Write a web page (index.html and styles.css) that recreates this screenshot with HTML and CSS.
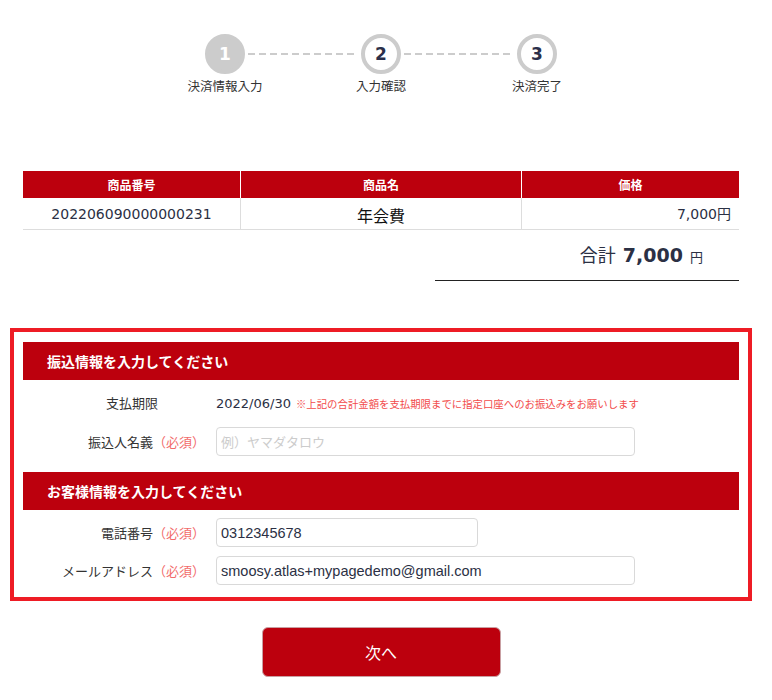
FILE: index.html
```html
<!DOCTYPE html>
<html lang="ja">
<head>
  <meta charset="UTF-8" />
  <meta name="viewport" content="width=device-width, initial-scale=1.0"/>
  <title>決済情報入力</title>
  <link rel="stylesheet" href="styles.css">
</head>
<body>

<div class="page">
  <div class="inner">
    <div class="steps">
      <div class="step current"><span class="num">1</span><span class="step-label">決済情報入力</span></div>
      <span class="dash"></span>
      <div class="step"><span class="num">2</span><span class="step-label">入力確認</span></div>
      <span class="dash"></span>
      <div class="step"><span class="num">3</span><span class="step-label">決済完了</span></div>
    </div>

    <table class="items">
      <thead>
        <tr>
          <th class="col-no">商品番号</th>
          <th class="col-name">商品名</th>
          <th class="col-price">価格</th>
        </tr>
      </thead>
      <tbody>
        <tr>
          <td class="code">202206090000000231</td>
          <td class="name">年会費</td>
          <td class="price">7,000円</td>
        </tr>
      </tbody>
    </table>

    <div class="total">
      <span class="total-label">合計</span>
      <span class="total-value">7,000</span>
      <span class="total-yen">円</span>
    </div>
  </div>

  <form class="pay-form" id="pay-form">
    <h3 class="form-head">振込情報を入力してください</h3>
    <div class="field">
      <span class="label plain">支払期限</span>
      <div class="value">
        <span class="date">2022/06/30</span>
        <span class="note">※上記の合計金額を支払期限までに指定口座へのお振込みをお願いします</span>
      </div>
    </div>
    <div class="field">
      <label class="label" for="payer">振込人名義<span class="req">（必須）</span></label>
      <input type="text" class="box" id="payer" placeholder="例）ヤマダタロウ">
    </div>

    <h3 class="form-head second">お客様情報を入力してください</h3>
    <div class="field">
      <label class="label" for="tel">電話番号<span class="req">（必須）</span></label>
      <input type="text" class="box short" id="tel" value="0312345678">
    </div>
    <div class="field last">
      <label class="label" for="mail">メールアドレス<span class="req">（必須）</span></label>
      <input type="text" class="box" id="mail" value="smoosy.atlas+mypagedemo@gmail.com">
    </div>
  </form>

  <div class="actions">
    <button type="submit" form="pay-form" class="next-btn">次へ</button>
  </div>
</div>

</body>
</html>
```

FILE: styles.css
```css
body {
  margin: 0;
  font-family: "DejaVu Sans", "Noto Sans CJK JP", sans-serif;
  color: #2b3044;
  background: #fff;
}
.page {
  width: 742px;
  margin-left: 10px;
  padding-top: 34px;
}
.inner {
  padding: 0 13px;
}

/* stepper */
.steps {
  display: flex;
  justify-content: center;
  align-items: flex-start;
}
.step {
  width: 40px;
  display: flex;
  flex-direction: column;
  align-items: center;
}
.num {
  box-sizing: border-box;
  width: 40px;
  height: 40px;
  border: 4px solid #cccccc;
  border-radius: 50%;
  background: #fff;
  display: flex;
  align-items: center;
  justify-content: center;
  font-weight: bold;
  font-size: 17px;
  color: #2b2f4a;
}
.step.current .num {
  background: #cccccc;
  color: #fff;
}
.step-label {
  margin-top: 4px;
  white-space: nowrap;
  font-family: "Noto Sans CJK JP", sans-serif;
  font-size: 12.5px;
  line-height: 16px;
  color: #333;
}
.dash {
  width: 110px;
  height: 2px;
  margin: 19px 3px 0;
  background: repeating-linear-gradient(to right, #cccccc 0 7px, transparent 7px 11px);
}

/* items table */
.items {
  width: 716px;
  margin-top: 77px;
  border-collapse: collapse;
  table-layout: fixed;
}
.col-no, .col-price {
  width: 217px;
}
.items th {
  height: 27px;
  padding: 0;
  background: #bc000d;
  color: #fff;
  font-family: "Noto Sans CJK JP", sans-serif;
  font-size: 12px;
  font-weight: bold;
  border-left: 1px solid #fff;
}
.items th:first-child {
  border-left: none;
}
.items td {
  height: 28px;
  padding: 0 8px;
  border-left: 1px solid #dddddd;
  border-bottom: 1px solid #dddddd;
  font-size: 14px;
  line-height: 18px;
}
.items td:first-child {
  border-left: none;
}
.code {
  text-align: center;
}
.items td.name {
  text-align: center;
  font-family: "Noto Sans CJK JP", sans-serif;
  font-size: 16px;
  line-height: 20px;
  padding-top: 3px;
  color: #111;
}
.price {
  text-align: right;
}

.total {
  width: 268px;
  margin: 9px 0 0 auto;
  padding: 0 36px 8px 0;
  line-height: 30px;
  text-align: right;
  border-bottom: 1px solid #222;
}
.total-label {
  font-family: "Noto Sans CJK JP", sans-serif;
  font-size: 18px;
}
.total-value {
  font-size: 19px;
  font-weight: bold;
  margin: 0 2px;
}
.total-yen {
  font-family: "Noto Sans CJK JP", sans-serif;
  font-size: 13px;
}

/* form */
.pay-form {
  margin: 47px 0 0;
  padding: 10px 9px 12px;
  border: 4px solid #ee1c25;
}
.form-head {
  margin: 0;
  height: 38px;
  line-height: 38px;
  padding-left: 24px;
  background: #bc000d;
  color: #fff;
  font-family: "Noto Sans CJK JP", sans-serif;
  font-size: 14px;
  font-weight: bold;
}
.form-head.second {
  margin-top: 16px;
}
.field {
  display: grid;
  grid-template-columns: 182px 1fr;
  column-gap: 11px;
  align-items: center;
  margin-top: 8px;
}
.field + .field {
  margin-top: 9px;
}
.field.last {
  margin-top: 9px;
}
.label {
  text-align: right;
  font-family: "Noto Sans CJK JP", sans-serif;
  font-size: 13px;
  line-height: 20px;
  color: #333;
}
.label.plain {
  padding-right: 47px;
  line-height: 30px;
}
.req {
  color: #f26b6b;
}
.value {
  display: flex;
  align-items: center;
  gap: 5px;
}
.date {
  font-size: 13px;
}
.note {
  font-family: "Noto Sans CJK JP", sans-serif;
  font-size: 10.4px;
  color: #f24b4b;
}
.box {
  box-sizing: border-box;
  width: 419px;
  height: 29px;
  padding: 0 4px;
  border: 1px solid #d9d9d9;
  border-radius: 4px;
  font-family: "Liberation Sans", sans-serif;
  font-size: 14.5px;
  color: #2b3044;
}
.box.short {
  width: 262px;
}
.box::placeholder {
  font-family: "Noto Sans CJK JP", sans-serif;
  font-size: 13px;
  color: #cccccc;
}

.actions {
  display: flex;
  justify-content: center;
  margin-top: 26px;
}
.next-btn {
  width: 239px;
  height: 50px;
  background: #bc000d;
  border: 1px solid #c9a0a3;
  border-radius: 6px;
  color: #fff;
  font-family: "Noto Sans CJK JP", sans-serif;
  font-size: 16px;
  cursor: pointer;
}
```
